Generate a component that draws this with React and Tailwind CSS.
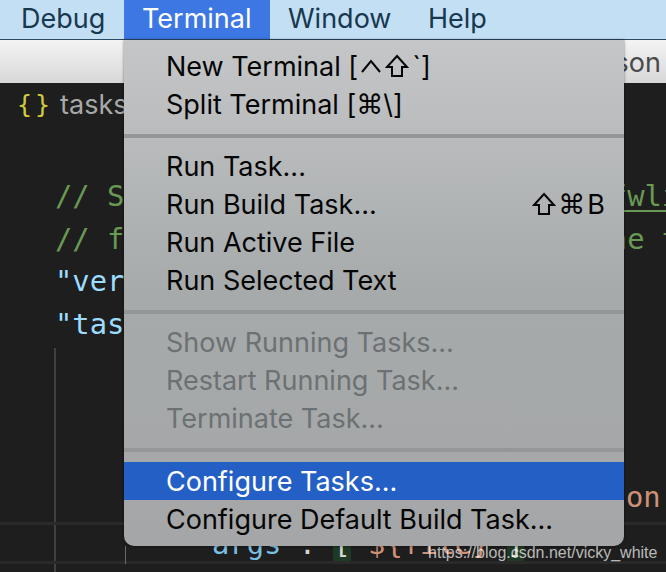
const MENU_FONT = 'font-["Inter","Liberation_Sans",sans-serif]';
const CODE_FONT = 'font-["DejaVu_Sans_Mono","Liberation_Mono",monospace]';

const MENU_BAR = [
  { label: 'Debug', cls: 'w-[124px] pl-[21px]' },
  { label: 'Terminal', cls: 'w-[146px] pl-[18px] bg-[#3d77e3] text-white' },
  { label: 'Window', cls: 'w-[140px] pl-[18px]' },
  { label: 'Help', cls: 'pl-[18px]' },
];

function ShiftIcon() {
  return (
    <svg width="24" height="24" viewBox="0 0 24 24" fill="none" stroke="currentColor" strokeWidth="2" className="shrink-0">
      <path d="M12 2 L22 13 H17 V22 H7 V13 H2 Z" strokeLinejoin="miter" />
    </svg>
  );
}

function ControlIcon() {
  return (
    <svg width="22" height="16" viewBox="0 0 22 16" fill="none" stroke="currentColor" strokeWidth="2" className="shrink-0">
      <path d="M2 14 L11 3 L20 14" />
    </svg>
  );
}

function Item({ children, right, disabled, active }) {
  return (
    <div
      className={`h-[38px] pl-[42px] pr-[19px] flex items-center justify-between whitespace-pre text-[27px] leading-none ${
        active ? 'bg-[#245fc6] text-white' : disabled ? 'text-[#6c7173]' : 'text-[#050505]'
      }`}
    >
      <span className="flex items-center">{children}</span>
      {right}
    </div>
  );
}

function Separator({ className }) {
  return <div className={`h-1 bg-[#949798] ${className}`} />;
}

function Menu() {
  return (
    <div className={`absolute left-[124px] top-[40px] w-[500px] h-[506px] pt-[7px] rounded-b-[10px] bg-gradient-to-b from-[#c5c6c7] via-[#a6aaab] via-50% to-[#a5a6a7] shadow-[0_0_3px_rgba(0,0,0,0.5)] ${MENU_FONT}`}>
      <Item>
        New Terminal [
        <span className="ml-[2px] mr-[3px]"><ControlIcon /></span>
        <ShiftIcon />
        <span className="ml-[3px]">`]</span>
      </Item>
      <Item>
        Split Terminal [<span className="font-['DejaVu_Sans'] text-[27px]">⌘</span>\]
      </Item>
      <Separator className="mt-[11px] mb-[9px]" />
      <Item>Run Task...</Item>
      <Item
        right={
          <span className="flex items-center gap-[2px]">
            <ShiftIcon />
            <span className="font-['DejaVu_Sans'] text-[27px]">⌘</span>
            B
          </span>
        }
      >
        Run Build Task...
      </Item>
      <Item>Run Active File</Item>
      <Item>Run Selected Text</Item>
      <Separator className="mt-[11px] mb-[9px]" />
      <Item disabled>Show Running Tasks...</Item>
      <Item disabled>Restart Running Task...</Item>
      <Item disabled>Terminate Task...</Item>
      <Separator className="mt-[11px] mb-[10px]" />
      <Item active>Configure Tasks...</Item>
      <Item>Configure Default Build Task...</Item>
    </div>
  );
}

function CodeLine({ className, children }) {
  return <div className={`h-[42.7px] leading-[42.7px] whitespace-pre ${className}`}>{children}</div>;
}

export default function App() {
  return (
    <div className="relative w-[666px] h-[572px] overflow-hidden bg-[#1e1e1e]">
      <div className={`h-[40px] flex items-center bg-[#c3dff3] border-b border-[#2b4a63] text-[27px] text-[#17384f] ${MENU_FONT}`}>
        {MENU_BAR.map(({ label, cls }) => (
          <div key={label} className={`h-full flex items-center ${cls}`}>{label}</div>
        ))}
      </div>

      <div className={`h-[43px] pt-[3px] pr-[5px] flex items-center justify-end bg-gradient-to-b from-[#f4f4f4] to-[#d8d8d8] text-[27px] text-[#4a4a4a] ${MENU_FONT}`}>
        son
      </div>

      <div className={`h-[44px] pl-[17px] flex items-center text-[27px] text-[#a8a8a8] ${MENU_FONT}`}>
        <span className={`w-[43px] flex gap-[9px] text-[25px] text-[#cfcb3e] ${CODE_FONT}`}>
          <span className="w-[9px]">{'{'}</span>
          <span className="w-[9px]">{'}'}</span>
        </span>
        tasks.json
      </div>

      <div className={`pl-[55px] pt-[48px] text-[28.8px] ${CODE_FONT}`}>
        <CodeLine className="text-[#6a9955]">
          {'// See https://go.microsoft.com/'}
          <span className="underline underline-offset-4">fwlink</span>
        </CodeLine>
        <CodeLine className="text-[#6a9955]">{'// for the documentation about the tasks'}</CodeLine>
        <CodeLine className="text-[#9cdcfe]">"version": "2.0.0",</CodeLine>
        <CodeLine className="text-[#9cdcfe]">"tasks": [</CodeLine>
      </div>

      <div className={`absolute left-[-15px] top-[130px] text-[28.8px] leading-[40px] text-[#d4d4d4] ${CODE_FONT}`}>{'{'}</div>
      <div className="absolute left-[54px] top-[348px] bottom-0 w-[2px] bg-[#404040]" />
      <div className="absolute left-0 right-0 top-[522px] h-[3px] bg-[#2a2a2a]" />
      <div className="absolute left-0 right-0 top-[561px] h-[3px] bg-[#2a2a2a]" />
      <div className="absolute left-[125px] top-[546px] h-[18px] w-[1px] bg-[#6a6a6a]" />

      <div className={`absolute left-[212px] top-[524px] whitespace-pre text-[28.8px] leading-[40px] text-[#7cbfe4] ${CODE_FONT}`}>
        args<span className="text-[#d4d4d4]"> : </span>
        <span className="text-[#d4d4d4] bg-[#1e3a24]">[</span>
        <span className="text-[#ce9178]"> ${'{'}file{'}'} </span>
        <span className="text-[#d4d4d4] bg-[#1e3a24]">]</span>
      </div>
      <div className={`absolute left-[626px] top-[477px] whitespace-pre text-[28.8px] leading-[40px] text-[#ce9178] ${CODE_FONT}`}>on:</div>

      <Menu />

      <div className="absolute left-[428px] top-[545px] font-['Liberation_Sans',sans-serif] text-[16px] leading-none text-white/70 whitespace-pre">
        https://blog.csdn.net/vicky_white
      </div>
    </div>
  );
}
